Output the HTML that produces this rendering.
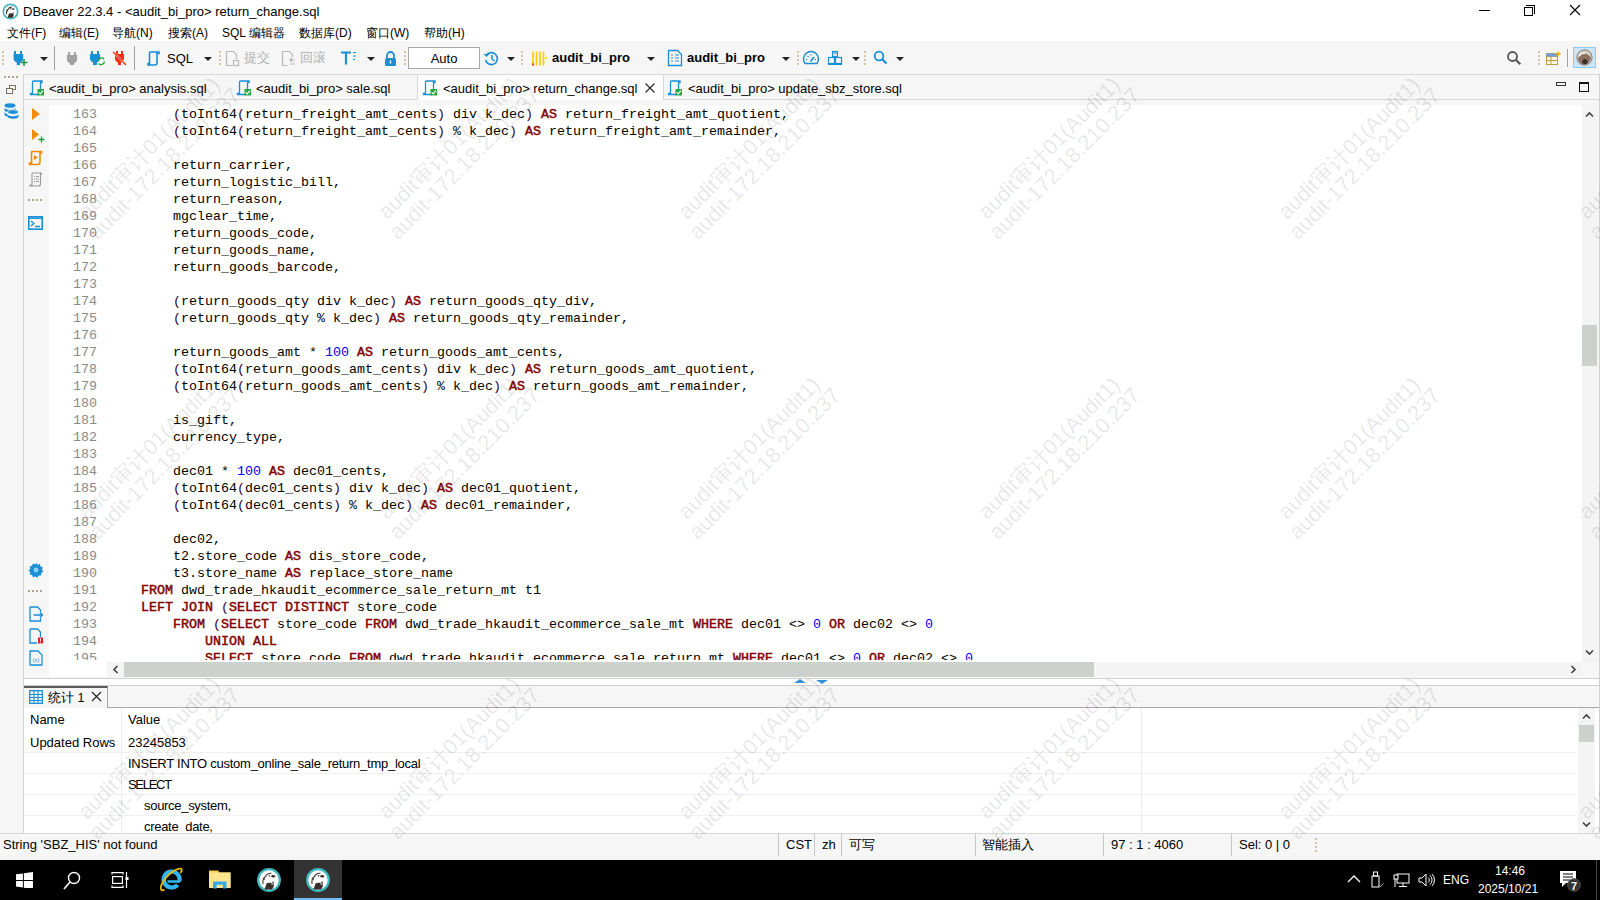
<!DOCTYPE html><html><head><meta charset="utf-8"><style>
*{margin:0;padding:0;box-sizing:border-box}
html,body{width:1600px;height:900px;overflow:hidden;background:#fff;font-family:"Liberation Sans",sans-serif;font-size:13px;color:#000}
.abs{position:absolute}
.t{position:absolute;white-space:pre;line-height:16px}
.code{position:absolute;left:0;white-space:pre;font-family:"Liberation Mono",monospace;font-size:13.33px;line-height:17px;color:#000}
.k{color:#800000;-webkit-text-stroke:0.45px #800000}
.n{color:#0000ff}
.p{color:#300040}
.ln{position:absolute;left:49px;width:48px;text-align:right;font-family:"Liberation Mono",monospace;font-size:13.33px;line-height:17px;color:#8a8a8a}
.sep{position:absolute;width:1px;background:#a0a0a0}
.grip{position:absolute;width:2px;background:repeating-linear-gradient(#cfc3a8 0 2px,transparent 2px 4px)}
.dd{position:absolute;width:0;height:0;border-left:4px solid transparent;border-right:4px solid transparent;border-top:4px solid #222}
.wm{position:absolute;width:300px;text-align:center;color:rgba(0,0,0,0.105);font-size:21.5px;line-height:22px;-webkit-text-stroke:0.2px rgba(0,0,0,0.06);transform:rotate(-45deg);white-space:pre;pointer-events:none}
</style></head><body>

<div class="abs" style="left:0;top:0;width:1600px;height:41px;background:#fff"></div>
<svg class="abs" style="left:2px;top:3px" width="17" height="17" viewBox="0 0 26 26"><circle cx="13" cy="13" r="11" fill="#fff" stroke="#42b8c2" stroke-width="2.6"/><path d="M8.5 22.5L10.5 16.5C12 15.5 14 15.5 15.5 16L17.5 14 17.8 19.5 16 22.5z" fill="#3a2e2a"/><ellipse cx="17.2" cy="9.2" rx="2" ry="1.3" fill="#3a2e2a"/><circle cx="13.5" cy="8.8" r="1" fill="#3a2e2a"/><path d="M7 17C6.5 13 7.5 10.5 9.5 9.5C10.5 7.2 12.5 6 15.5 6.2" fill="none" stroke="#3a2e2a" stroke-width="1.6"/><path d="M7 11.5l1.5-1 0.5 3z" fill="#3a2e2a"/></svg>
<div class="t" style="left:23px;top:4px;font-size:13px">DBeaver 22.3.4 - &lt;audit_bi_pro&gt; return_change.sql</div>
<div class="abs" style="left:1479px;top:10px;width:11px;height:1px;background:#000"></div>
<div class="abs" style="left:1526px;top:5px;width:9px;height:9px;border-top:1px solid #000;border-right:1px solid #000"></div>
<div class="abs" style="left:1524px;top:7px;width:9px;height:9px;border:1px solid #000;background:#fff"></div>
<svg class="abs" style="left:1569px;top:4px" width="12" height="12" viewBox="0 0 12 12"><path d="M1 1L11 11M11 1L1 11" stroke="#000" stroke-width="1.1"/></svg>
<div class="t" style="left:7px;top:25px;font-size:12px;line-height:16px">文件(F)</div>
<div class="t" style="left:59px;top:25px;font-size:12px;line-height:16px">编辑(E)</div>
<div class="t" style="left:112px;top:25px;font-size:12px;line-height:16px">导航(N)</div>
<div class="t" style="left:168px;top:25px;font-size:12px;line-height:16px">搜索(A)</div>
<div class="t" style="left:222px;top:25px;font-size:12px;line-height:16px">SQL 编辑器</div>
<div class="t" style="left:299px;top:25px;font-size:12px;line-height:16px">数据库(D)</div>
<div class="t" style="left:366px;top:25px;font-size:12px;line-height:16px">窗口(W)</div>
<div class="t" style="left:424px;top:25px;font-size:12px;line-height:16px">帮助(H)</div>
<div class="abs" style="left:0;top:41px;width:1600px;height:33px;background:#f6f6f6"></div>
<div class="grip" style="left:2px;top:51px;height:16px"></div>
<svg class="abs" style="left:12px;top:50px" width="18" height="17" viewBox="0 0 18 17">
<path d="M2 1h2v3h4V1h2v3h1.2v4.5c0 2-1.4 3.6-3.2 4.1V15H4.8v-2.4C3 12.1 1.6 10.5 1.6 8.5V4H2z" fill="#1a8fd6"/>
<path d="M12 9v7M8.5 12.5h7" stroke="#1aa03c" stroke-width="1.6"/></svg>
<div class="dd" style="left:40px;top:57px;border-top-color:#222"></div>
<div class="sep" style="left:54px;top:46px;height:24px"></div>
<svg class="abs" style="left:66px;top:51px" width="13" height="15" viewBox="0 0 13 15">
<path d="M2 1h2v3h4V1h2v3h1v4.5c0 2-1.4 3.4-3 3.9V14H4v-1.6C2.4 11.9 1 10.5 1 8.5V4h1z" fill="#a3a3a3"/></svg>
<svg class="abs" style="left:89px;top:50px" width="17" height="17" viewBox="0 0 17 17">
<path d="M2 1h2v3h4V1h2v3h1v4.5c0 2-1.4 3.4-3 3.9V15H4v-2.6C2.4 11.9 1 10.5 1 8.5V4h1z" fill="#1a8fd6"/>
<path d="M9 11a3.5 3.5 0 0 1 6-2M15.5 11.5a3.5 3.5 0 0 1-6 2" stroke="#1aa03c" stroke-width="1.4" fill="none"/></svg>
<svg class="abs" style="left:112px;top:50px" width="15" height="17" viewBox="0 0 15 17">
<path d="M4 1h2v3h3V1h2v3h1v4.5c0 2-1.4 3.4-3 3.9V15H6v-2.6C4.4 11.9 3 10.5 3 8.5V4h1z" fill="#ff2a12"/>
<path d="M1 2L14 15" stroke="#f6f6f6" stroke-width="2"/><path d="M1 2L14 15" stroke="#ff2a12" stroke-width="1.2"/></svg>
<div class="sep" style="left:134px;top:46px;height:24px"></div>
<svg class="abs" style="left:146px;top:50px" width="17" height="17" viewBox="0 0 17 17"><path d="M4 2h9v1.5h-2V13c0 1-1 2-2 2H2v-1.5h1.5V3.5C3.5 2.5 3.7 2 4 2z" fill="none" stroke="#1a8fd6" stroke-width="1.6"/></svg>
<div class="t" style="left:167px;top:51px;font-size:13px">SQL</div>
<div class="dd" style="left:204px;top:57px;border-top-color:#222"></div>
<div class="grip" style="left:219px;top:51px;height:16px"></div>
<svg class="abs" style="left:225px;top:50px" width="15" height="17" viewBox="0 0 15 17"><path d="M1.5 1.5h7l3 3V9M1.5 1.5V15.5h6" fill="none" stroke="#b8b8b8" stroke-width="1.2"/><rect x="8.5" y="10.5" width="5" height="5" fill="none" stroke="#b8b8b8" stroke-width="1.2"/></svg>
<div class="t" style="left:244px;top:50px;font-size:12.5px;color:#b0b0b0">提交</div>
<svg class="abs" style="left:281px;top:50px" width="15" height="17" viewBox="0 0 15 17"><path d="M1.5 1.5h7l3 3V7M1.5 1.5V15.5h5" fill="none" stroke="#b8b8b8" stroke-width="1.2"/><path d="M9 10h5M11 8l-2 2 2 2M9 14h5" fill="none" stroke="#b8b8b8" stroke-width="1.2"/></svg>
<div class="t" style="left:300px;top:50px;font-size:12.5px;color:#b0b0b0">回滚</div>
<svg class="abs" style="left:340px;top:50px" width="17" height="17" viewBox="0 0 17 17"><path d="M1 2.5h10M6 2.5v12" stroke="#1a8fd6" stroke-width="2.2"/><path d="M13 2.5h3M13 6h3M13 9.5h2" stroke="#1a8fd6" stroke-width="1.2"/></svg>
<div class="dd" style="left:367px;top:57px;border-top-color:#222"></div>
<svg class="abs" style="left:383px;top:50px" width="15" height="17" viewBox="0 0 15 17"><path d="M4 8V5.5a3.5 3.5 0 0 1 7 0V8" fill="none" stroke="#1a8fd6" stroke-width="1.8"/><rect x="2" y="8" width="11" height="8" rx="1.5" fill="#1a8fd6"/><rect x="6.8" y="10.5" width="1.4" height="3" fill="#fff"/></svg>
<div class="grip" style="left:404px;top:51px;height:16px"></div>
<div class="abs" style="left:408px;top:47px;width:72px;height:22px;border:1px solid #a8a8a8;background:#fff"></div>
<div class="t" style="left:408px;top:51px;width:72px;text-align:center;font-size:13px">Auto</div>
<svg class="abs" style="left:483px;top:50px" width="17" height="17" viewBox="0 0 17 17"><path d="M3.2 5.5A6 6 0 1 1 2.5 10" fill="none" stroke="#1a8fd6" stroke-width="1.6"/><path d="M0.5 4l3 3 3-3z" fill="#1a8fd6"/><path d="M9 5v4l2.5 2" fill="none" stroke="#1a8fd6" stroke-width="1.5"/></svg>
<div class="dd" style="left:507px;top:57px;border-top-color:#222"></div>
<div class="grip" style="left:521px;top:51px;height:16px"></div>
<svg class="abs" style="left:531px;top:50px" width="17" height="17" viewBox="0 0 17 17"><path d="M2 1.5v14M5.5 1.5v14M9 1.5v14M12.5 1.5v14" stroke="#ffcc00" stroke-width="1.7"/><path d="M2 13.5v2" stroke="#e8201a" stroke-width="1.7"/><circle cx="15.2" cy="8" r="1" fill="#ffcc00"/></svg>
<div class="t" style="left:552px;top:50px;font-size:13px;font-weight:bold">audit_bi_pro</div>
<div class="dd" style="left:647px;top:57px;border-top-color:#222"></div>
<svg class="abs" style="left:667px;top:49px" width="16" height="18" viewBox="0 0 16 18"><path d="M1.5 1.5h9l4 4v11h-13z" fill="none" stroke="#1a8fd6" stroke-width="1.3"/><path d="M4 6h2M4 9h2M4 12h2M8 6h4M8 9h4M8 12h4" stroke="#1a8fd6" stroke-width="1.2"/></svg>
<div class="t" style="left:687px;top:50px;font-size:13px;font-weight:bold">audit_bi_pro</div>
<div class="dd" style="left:782px;top:57px;border-top-color:#222"></div>
<div class="grip" style="left:797px;top:51px;height:16px"></div>
<svg class="abs" style="left:802px;top:50px" width="18" height="16" viewBox="0 0 18 16"><path d="M3 13.5A7.5 7.5 0 1 1 15 13.5Z" fill="none" stroke="#1a8fd6" stroke-width="1.5"/><path d="M8.5 11.5l3.5-4.5" stroke="#1a8fd6" stroke-width="1.7"/><path d="M4 9.5h1.5M12.5 9.5H14M9 4v1.5M5.5 6l1 1" stroke="#1a8fd6" stroke-width="1.1"/></svg>
<svg class="abs" style="left:827px;top:50px" width="16" height="16" viewBox="0 0 16 16"><rect x="5.5" y="1.5" width="5" height="5" fill="none" stroke="#1a8fd6" stroke-width="1.2"/><path d="M7 1.5v2h2v-2" fill="none" stroke="#1a8fd6" stroke-width="0.9"/><rect x="1.5" y="7.5" width="6" height="6" fill="none" stroke="#1a8fd6" stroke-width="1.2"/><rect x="8.5" y="7.5" width="6" height="6" fill="none" stroke="#1a8fd6" stroke-width="1.2"/><path d="M1 14.5h14" stroke="#1a8fd6" stroke-width="1"/></svg>
<div class="dd" style="left:852px;top:57px;border-top-color:#222"></div>
<div class="grip" style="left:864px;top:51px;height:16px"></div>
<svg class="abs" style="left:873px;top:50px" width="15" height="15" viewBox="0 0 15 15"><circle cx="6" cy="6" r="4.3" fill="none" stroke="#1a8fd6" stroke-width="1.8"/><path d="M9 9l4.5 4.5" stroke="#1a8fd6" stroke-width="2.2"/></svg>
<div class="dd" style="left:896px;top:57px;border-top-color:#222"></div>
<svg class="abs" style="left:1506px;top:50px" width="16" height="16" viewBox="0 0 16 16"><circle cx="6.5" cy="6.5" r="4.5" fill="none" stroke="#555" stroke-width="1.8"/><path d="M9.8 9.8l4.5 4.5" stroke="#555" stroke-width="2.2"/></svg>
<div class="grip" style="left:1538px;top:51px;height:16px"></div>
<svg class="abs" style="left:1545px;top:50px" width="17" height="16" viewBox="0 0 17 16"><rect x="1.5" y="3.5" width="11" height="11" fill="#fff8e0" stroke="#b89a50" stroke-width="1"/><path d="M1.5 6.5h11M1.5 10.5h11M6 3.5v11" stroke="#b89a50" stroke-width="1"/><path d="M1.5 3.5h11v3h-11z" fill="#6aa0e0"/><path d="M13 0.5l1 2.5 2.5 1-2.5 1-1 2.5-1-2.5-2.5-1 2.5-1z" fill="#f0b000"/></svg>
<div class="sep" style="left:1567px;top:49px;height:18px"></div>
<div class="abs" style="left:1573px;top:47px;width:23px;height:21px;background:#cce4f7;border:1px solid #99c9ef"></div>
<svg class="abs" style="left:1576px;top:49px" width="17" height="17" viewBox="0 0 17 17"><circle cx="8.5" cy="8.5" r="7.5" fill="#d8d0c8"/><path d="M2 10c1-4 4-6 7-5.5 3 0.5 5 2.5 6 4.5-1 4-4 6.5-7 6.5-3 0-5-2-6-5.5z" fill="#8a7060"/><path d="M6 14c0-2 1-4 3-4s3 2 3 4c-2 1.5-4 1.5-6 0z" fill="#3a2e28"/><path d="M3 7c2-2 4-3 6-2.5" stroke="#fff" stroke-width="1.2" fill="none"/><circle cx="8.5" cy="8.5" r="7.6" fill="none" stroke="#6a5a50" stroke-width="0.8"/></svg>
<div class="abs" style="left:0;top:74px;width:23px;height:759px;background:#f6f6f6"></div>
<div class="abs" style="left:23px;top:74px;width:1px;height:759px;background:#d4d4d4"></div>
<div class="abs" style="left:4px;top:76px;width:14px;height:2px;background:repeating-linear-gradient(90deg,#aca58f 0 2px,transparent 2px 4px)"></div>
<svg class="abs" style="left:6px;top:85px" width="10" height="9" viewBox="0 0 10 9"><rect x="3.5" y="0.5" width="6" height="4" fill="none" stroke="#7a7060" stroke-width="1"/><rect x="0.5" y="3.5" width="6" height="5" fill="#f6f6f6" stroke="#7a7060" stroke-width="1"/></svg>
<svg class="abs" style="left:3px;top:102px" width="17" height="18" viewBox="0 0 17 18"><ellipse cx="7" cy="3.5" rx="5.5" ry="2.3" fill="#1a8fd6"/><path d="M1.5 5.5c0 3 11 3 11 0v2.5c0 3-11 3-11 0z" fill="#1a8fd6"/><ellipse cx="10" cy="10" rx="5.5" ry="2.3" fill="#1a8fd6" stroke="#f6f6f6" stroke-width="0.8"/><path d="M4.5 12c0 3 11 3 11 0v2.5c0 3-11 3-11 0z" fill="#1a8fd6"/><path d="M1.5 9c0 3 3 3 3 3v2.5c-1 0-3-0.5-3-2z" fill="#1a8fd6"/></svg>
<div class="abs" style="left:24px;top:74px;width:1576px;height:26px;background:#f6f6f6;border-top:1px solid #d8d8d8;border-bottom:1px solid #d8d8d8"></div>
<div class="abs" style="left:417px;top:74px;width:247px;height:26px;background:#fff;border-left:1px solid #d8d8d8;border-right:1px solid #d8d8d8;border-top:1px solid #d8d8d8"></div>
<svg class="abs" style="left:29px;top:80px" width="16" height="16" viewBox="0 0 16 16"><path d="M4.5 1h8.5v1.5h-1.5V12M4.5 1C3.8 1 3.5 1.5 3.5 2V13.5H1.5v1h8" fill="none" stroke="#1a8fd6" stroke-width="1.3"/><rect x="8.5" y="9" width="6.5" height="6.5" fill="#28a745"/><path d="M9.8 12.3l1.5 1.6 2.6-3.2" fill="none" stroke="#fff" stroke-width="1.1"/></svg>
<div class="t" style="left:49px;top:81px;font-size:13px">&lt;audit_bi_pro&gt; analysis.sql</div>
<svg class="abs" style="left:236px;top:80px" width="16" height="16" viewBox="0 0 16 16"><path d="M4.5 1h8.5v1.5h-1.5V12M4.5 1C3.8 1 3.5 1.5 3.5 2V13.5H1.5v1h8" fill="none" stroke="#1a8fd6" stroke-width="1.3"/><rect x="8.5" y="9" width="6.5" height="6.5" fill="#28a745"/><path d="M9.8 12.3l1.5 1.6 2.6-3.2" fill="none" stroke="#fff" stroke-width="1.1"/></svg>
<div class="t" style="left:256px;top:81px;font-size:13px">&lt;audit_bi_pro&gt; sale.sql</div>
<svg class="abs" style="left:422px;top:80px" width="16" height="16" viewBox="0 0 16 16"><path d="M4.5 1h8.5v1.5h-1.5V12M4.5 1C3.8 1 3.5 1.5 3.5 2V13.5H1.5v1h8" fill="none" stroke="#1a8fd6" stroke-width="1.3"/><rect x="8.5" y="9" width="6.5" height="6.5" fill="#28a745"/><path d="M9.8 12.3l1.5 1.6 2.6-3.2" fill="none" stroke="#fff" stroke-width="1.1"/></svg>
<div class="t" style="left:443px;top:81px;font-size:13px">&lt;audit_bi_pro&gt; return_change.sql</div>
<svg class="abs" style="left:667px;top:80px" width="16" height="16" viewBox="0 0 16 16"><path d="M4.5 1h8.5v1.5h-1.5V12M4.5 1C3.8 1 3.5 1.5 3.5 2V13.5H1.5v1h8" fill="none" stroke="#1a8fd6" stroke-width="1.3"/><rect x="8.5" y="9" width="6.5" height="6.5" fill="#28a745"/><path d="M9.8 12.3l1.5 1.6 2.6-3.2" fill="none" stroke="#fff" stroke-width="1.1"/></svg>
<div class="t" style="left:688px;top:81px;font-size:13px">&lt;audit_bi_pro&gt; update_sbz_store.sql</div>
<svg class="abs" style="left:644px;top:82px" width="12" height="12" viewBox="0 0 12 12"><path d="M1.5 1.5l9 9M10.5 1.5l-9 9" stroke="#222" stroke-width="1.1"/></svg>
<div class="abs" style="left:1556px;top:82px;width:10px;height:4px;border:1.5px solid #333"></div>
<div class="abs" style="left:1579px;top:82px;width:10px;height:10px;border:1px solid #111;border-top-width:2px"></div>
<div class="abs" style="left:24px;top:100px;width:1576px;height:578px;background:#f6f6f6"></div>
<div class="abs" style="left:1599px;top:74px;width:1px;height:759px;background:#d0d0d0"></div>
<div class="abs" style="left:49px;top:105px;width:1533px;height:572px;background:#fff"></div>
<div class="abs" style="left:1582px;top:105px;width:17px;height:557px;background:#f4f4f4"></div>
<div class="abs" style="left:1582px;top:325px;width:15px;height:41px;background:#cdd1cd"></div>
<svg class="abs" style="left:1585px;top:110px;transform:rotate(0deg)" width="9" height="9" viewBox="0 0 9 9"><path d="M1 6.5L4.5 3 8 6.5" fill="none" stroke="#444" stroke-width="1.7"/></svg>
<svg class="abs" style="left:1585px;top:648px;transform:rotate(180deg)" width="9" height="9" viewBox="0 0 9 9"><path d="M1 6.5L4.5 3 8 6.5" fill="none" stroke="#444" stroke-width="1.7"/></svg>
<div class="abs" style="left:107px;top:662px;width:1475px;height:15px;background:#f4f4f4"></div>
<div class="abs" style="left:124px;top:662px;width:970px;height:15px;background:#cdd1cd"></div>
<svg class="abs" style="left:111px;top:665px;transform:rotate(-90deg)" width="9" height="9" viewBox="0 0 9 9"><path d="M1 6.5L4.5 3 8 6.5" fill="none" stroke="#444" stroke-width="1.7"/></svg>
<svg class="abs" style="left:1569px;top:665px;transform:rotate(90deg)" width="9" height="9" viewBox="0 0 9 9"><path d="M1 6.5L4.5 3 8 6.5" fill="none" stroke="#444" stroke-width="1.7"/></svg>
<div class="abs" style="left:24px;top:678px;width:1575px;height:1px;background:#d0d0d0"></div>
<div class="abs" style="left:24px;top:685px;width:1575px;height:1px;background:#d0d0d0"></div>
<div class="abs" style="left:794px;top:679px;width:0;height:0;border-left:6px solid transparent;border-right:6px solid transparent;border-bottom:4px solid #3b8fd6"></div>
<div class="abs" style="left:816px;top:680px;width:0;height:0;border-left:6px solid transparent;border-right:6px solid transparent;border-top:4px solid #3b8fd6"></div>
<div class="abs" style="left:49px;top:105px;width:1533px;height:555px;overflow:hidden">
<div class="ln" style="left:0;top:1px">163</div>
<div class="code" style="left:124px;top:1px"><span class="p">(</span>toInt64<span class="p">(</span>return_freight_amt_cents<span class="p">)</span> div k_dec<span class="p">)</span> <span class="k">AS</span> return_freight_amt_quotient,</div>
<div class="ln" style="left:0;top:18px">164</div>
<div class="code" style="left:124px;top:18px"><span class="p">(</span>toInt64<span class="p">(</span>return_freight_amt_cents<span class="p">)</span> % k_dec<span class="p">)</span> <span class="k">AS</span> return_freight_amt_remainder,</div>
<div class="ln" style="left:0;top:35px">165</div>
<div class="ln" style="left:0;top:52px">166</div>
<div class="code" style="left:124px;top:52px">return_carrier,</div>
<div class="ln" style="left:0;top:69px">167</div>
<div class="code" style="left:124px;top:69px">return_logistic_bill,</div>
<div class="ln" style="left:0;top:86px">168</div>
<div class="code" style="left:124px;top:86px">return_reason,</div>
<div class="ln" style="left:0;top:103px">169</div>
<div class="code" style="left:124px;top:103px">mgclear_time,</div>
<div class="ln" style="left:0;top:120px">170</div>
<div class="code" style="left:124px;top:120px">return_goods_code,</div>
<div class="ln" style="left:0;top:137px">171</div>
<div class="code" style="left:124px;top:137px">return_goods_name,</div>
<div class="ln" style="left:0;top:154px">172</div>
<div class="code" style="left:124px;top:154px">return_goods_barcode,</div>
<div class="ln" style="left:0;top:171px">173</div>
<div class="ln" style="left:0;top:188px">174</div>
<div class="code" style="left:124px;top:188px"><span class="p">(</span>return_goods_qty div k_dec<span class="p">)</span> <span class="k">AS</span> return_goods_qty_div,</div>
<div class="ln" style="left:0;top:205px">175</div>
<div class="code" style="left:124px;top:205px"><span class="p">(</span>return_goods_qty % k_dec<span class="p">)</span> <span class="k">AS</span> return_goods_qty_remainder,</div>
<div class="ln" style="left:0;top:222px">176</div>
<div class="ln" style="left:0;top:239px">177</div>
<div class="code" style="left:124px;top:239px">return_goods_amt * <span class="n">100</span> <span class="k">AS</span> return_goods_amt_cents,</div>
<div class="ln" style="left:0;top:256px">178</div>
<div class="code" style="left:124px;top:256px"><span class="p">(</span>toInt64<span class="p">(</span>return_goods_amt_cents<span class="p">)</span> div k_dec<span class="p">)</span> <span class="k">AS</span> return_goods_amt_quotient,</div>
<div class="ln" style="left:0;top:273px">179</div>
<div class="code" style="left:124px;top:273px"><span class="p">(</span>toInt64<span class="p">(</span>return_goods_amt_cents<span class="p">)</span> % k_dec<span class="p">)</span> <span class="k">AS</span> return_goods_amt_remainder,</div>
<div class="ln" style="left:0;top:290px">180</div>
<div class="ln" style="left:0;top:307px">181</div>
<div class="code" style="left:124px;top:307px">is_gift,</div>
<div class="ln" style="left:0;top:324px">182</div>
<div class="code" style="left:124px;top:324px">currency_type,</div>
<div class="ln" style="left:0;top:341px">183</div>
<div class="ln" style="left:0;top:358px">184</div>
<div class="code" style="left:124px;top:358px">dec01 * <span class="n">100</span> <span class="k">AS</span> dec01_cents,</div>
<div class="ln" style="left:0;top:375px">185</div>
<div class="code" style="left:124px;top:375px"><span class="p">(</span>toInt64<span class="p">(</span>dec01_cents<span class="p">)</span> div k_dec<span class="p">)</span> <span class="k">AS</span> dec01_quotient,</div>
<div class="ln" style="left:0;top:392px">186</div>
<div class="code" style="left:124px;top:392px"><span class="p">(</span>toInt64<span class="p">(</span>dec01_cents<span class="p">)</span> % k_dec<span class="p">)</span> <span class="k">AS</span> dec01_remainder,</div>
<div class="ln" style="left:0;top:409px">187</div>
<div class="ln" style="left:0;top:426px">188</div>
<div class="code" style="left:124px;top:426px">dec02,</div>
<div class="ln" style="left:0;top:443px">189</div>
<div class="code" style="left:124px;top:443px">t2.store_code <span class="k">AS</span> dis_store_code,</div>
<div class="ln" style="left:0;top:460px">190</div>
<div class="code" style="left:124px;top:460px">t3.store_name <span class="k">AS</span> replace_store_name</div>
<div class="ln" style="left:0;top:477px">191</div>
<div class="code" style="left:92px;top:477px"><span class="k">FROM</span> dwd_trade_hkaudit_ecommerce_sale_return_mt t1</div>
<div class="ln" style="left:0;top:494px">192</div>
<div class="code" style="left:92px;top:494px"><span class="k">LEFT</span> <span class="k">JOIN</span> <span class="p">(</span><span class="k">SELECT</span> <span class="k">DISTINCT</span> store_code</div>
<div class="ln" style="left:0;top:511px">193</div>
<div class="code" style="left:124px;top:511px"><span class="k">FROM</span> <span class="p">(</span><span class="k">SELECT</span> store_code <span class="k">FROM</span> dwd_trade_hkaudit_ecommerce_sale_mt <span class="k">WHERE</span> dec01 &lt;&gt; <span class="n">0</span> <span class="k">OR</span> dec02 &lt;&gt; <span class="n">0</span></div>
<div class="ln" style="left:0;top:528px">194</div>
<div class="code" style="left:156px;top:528px"><span class="k">UNION</span> <span class="k">ALL</span></div>
<div class="ln" style="left:0;top:545px">195</div>
<div class="code" style="left:156px;top:545px"><span class="k">SELECT</span> store_code <span class="k">FROM</span> dwd_trade_hkaudit_ecommerce_sale_return_mt <span class="k">WHERE</span> dec01 &lt;&gt; <span class="n">0</span> <span class="k">OR</span> dec02 &lt;&gt; <span class="n">0</span></div>
</div>
<svg class="abs" style="left:31px;top:107px" width="10" height="14" viewBox="0 0 10 14"><path d="M1 1l8 6-8 6z" fill="#f28c00"/></svg>
<svg class="abs" style="left:31px;top:128px" width="14" height="15" viewBox="0 0 14 15"><path d="M1 1l7 5.5-7 5.5z" fill="#f28c00"/><path d="M10.5 8.5v6M7.5 11.5h6" stroke="#1aa03c" stroke-width="1.3"/></svg>
<svg class="abs" style="left:28px;top:150px" width="16" height="16" viewBox="0 0 16 16"><path d="M4 1.5h9.5v1.5h-1.5V12c0 1.5-1 2.5-2.5 2.5H1.5v-1.5h2V3C3.5 2 3.8 1.5 4 1.5z" fill="none" stroke="#f28c00" stroke-width="1.6"/><path d="M6 5l4 2.5-4 2.5z" fill="#f28c00"/></svg>
<svg class="abs" style="left:29px;top:172px" width="14" height="15" viewBox="0 0 14 15"><path d="M3.5 1h9v1h-1v10c0 1-1 2-2 2H1v-1h2V2C3 1.5 3.2 1 3.5 1z" fill="none" stroke="#9a9a9a" stroke-width="1.1"/><path d="M5 4.5h1M7 4.5h3M5 7h1M7 7h3M5 9.5h1M7 9.5h3" stroke="#9a9a9a" stroke-width="1"/></svg>
<div class="abs" style="left:28px;top:199px;width:14px;height:2px;background:repeating-linear-gradient(90deg,#aca58f 0 2px,transparent 2px 4px)"></div>
<svg class="abs" style="left:28px;top:216px" width="15" height="14" viewBox="0 0 15 14"><rect x="0.8" y="0.8" width="13.4" height="12.4" fill="none" stroke="#1a8fd6" stroke-width="1.6"/><path d="M0.8 2.2h13.4" stroke="#1a8fd6" stroke-width="1.5"/><path d="M3 5l3 2.5-3 2.5M7 10.5h5" fill="none" stroke="#1a8fd6" stroke-width="1.3"/></svg>
<svg class="abs" style="left:28px;top:562px" width="16" height="16" viewBox="0 0 16 16"><path d="M8 0.8l1.6 1.9 2.4-0.6 0.6 2.4 2.3 0.9-0.9 2.3 1.3 2.1-2.1 1.3 0 2.5-2.5 0-1.3 2.1-2.1-1.3-2.3 0.9-0.9-2.3-2.4-0.6 0.6-2.4-1.9-1.6 1.9-1.6-0.6-2.4 2.4-0.6 0.9-2.3 2.3 0.9z" fill="#1a8fd6"/><circle cx="8" cy="8" r="2.4" fill="#8fd0f5"/></svg>
<div class="abs" style="left:28px;top:590px;width:14px;height:2px;background:repeating-linear-gradient(90deg,#aca58f 0 2px,transparent 2px 4px)"></div>
<svg class="abs" style="left:29px;top:606px" width="15" height="16" viewBox="0 0 15 16"><path d="M1 1h7.5l3 3v2M1 1v14h10.5v-3" fill="none" stroke="#1a8fd6" stroke-width="1.3"/><path d="M4.5 9h9M11 6.5l2.5 2.5-2.5 2.5" fill="none" stroke="#1a8fd6" stroke-width="1.3"/></svg>
<svg class="abs" style="left:29px;top:628px" width="15" height="16" viewBox="0 0 15 16"><path d="M1 1h7.5l3 3v5M1 1v14h7" fill="none" stroke="#1a8fd6" stroke-width="1.3"/><rect x="9" y="9.5" width="5" height="6" fill="#e02020"/><path d="M11.5 10.5v2.5M11.5 14v0.8" stroke="#fff" stroke-width="1"/></svg>
<svg class="abs" style="left:29px;top:650px" width="14" height="16" viewBox="0 0 14 16"><path d="M1 1h8l4 4v10H1z" fill="none" stroke="#1a8fd6" stroke-width="1.3"/><text x="7" y="12" font-size="6" text-anchor="middle" fill="#1a8fd6" font-family="Liberation Sans">(x)</text></svg>
<div class="abs" style="left:24px;top:686px;width:1575px;height:22px;background:#f6f6f6;border-bottom:1px solid #a8a8a8"></div>
<div class="abs" style="left:24px;top:686px;width:84px;height:22px;background:#f6f6f6;border-right:1px solid #a8a8a8;border-top:2px solid #5a5a5a"></div>
<svg class="abs" style="left:29px;top:690px" width="14" height="14" viewBox="0 0 14 14"><rect x="0.7" y="0.7" width="12.6" height="12.6" fill="none" stroke="#1a8fd6" stroke-width="1.3"/><path d="M0.7 4.5h12.6M0.7 7.5h12.6M0.7 10.5h12.6M5 0.7v12.6M9 0.7v12.6" stroke="#1a8fd6" stroke-width="1.1"/></svg>
<div class="t" style="left:48px;top:690px;font-size:12.5px">统计 1</div>
<svg class="abs" style="left:91px;top:691px" width="11" height="11" viewBox="0 0 11 11"><path d="M1 1l9 9M10 1l-9 9" stroke="#222" stroke-width="1.1"/></svg>
<div class="abs" style="left:24px;top:708px;width:1575px;height:125px;background:#fff"></div>
<div class="abs" style="left:121px;top:708px;width:1px;height:125px;background:#e8eef2"></div>
<div class="abs" style="left:1141px;top:708px;width:1px;height:125px;background:#e8eef2"></div>
<div class="abs" style="left:24px;top:752px;width:1551px;height:1px;background:#f0f0f0"></div>
<div class="abs" style="left:24px;top:773px;width:1551px;height:1px;background:#f0f0f0"></div>
<div class="abs" style="left:24px;top:794px;width:1551px;height:1px;background:#f0f0f0"></div>
<div class="abs" style="left:24px;top:815px;width:1551px;height:1px;background:#f0f0f0"></div>
<div class="t" style="left:30px;top:712px;font-size:13px;letter-spacing:0px">Name</div>
<div class="t" style="left:128px;top:712px;font-size:13px;letter-spacing:0px">Value</div>
<div class="t" style="left:30px;top:735px;font-size:13px;letter-spacing:0px">Updated Rows</div>
<div class="t" style="left:128px;top:735px;font-size:13px;letter-spacing:0px">23245853</div>
<div class="t" style="left:128px;top:756px;font-size:13px;letter-spacing:-0.25px">INSERT INTO custom_online_sale_return_tmp_local</div>
<div class="t" style="left:128px;top:777px;font-size:13px;letter-spacing:-1.3px">SELECT</div>
<div class="t" style="left:144px;top:798px;font-size:13px;letter-spacing:-0.3px">source_system,</div>
<div class="t" style="left:144px;top:819px;font-size:13px;letter-spacing:-0.3px">create_date,</div>
<div class="abs" style="left:1578px;top:708px;width:17px;height:125px;background:#f4f4f4"></div>
<div class="abs" style="left:1579px;top:725px;width:15px;height:17px;background:#cdd1cd"></div>
<svg class="abs" style="left:1582px;top:712px;transform:rotate(0deg)" width="9" height="9" viewBox="0 0 9 9"><path d="M1 6.5L4.5 3 8 6.5" fill="none" stroke="#444" stroke-width="1.7"/></svg>
<svg class="abs" style="left:1582px;top:820px;transform:rotate(180deg)" width="9" height="9" viewBox="0 0 9 9"><path d="M1 6.5L4.5 3 8 6.5" fill="none" stroke="#444" stroke-width="1.7"/></svg>
<div class="abs" style="left:0;top:833px;width:1600px;height:27px;background:#f6f6f6;border-top:1px solid #d8d8d8"></div>
<div class="t" style="left:3px;top:837px;font-size:13px">String 'SBZ_HIS' not found</div>
<div class="sep" style="left:778px;top:834px;height:22px;background:#c8c8c8"></div>
<div class="sep" style="left:814px;top:834px;height:22px;background:#c8c8c8"></div>
<div class="sep" style="left:841px;top:834px;height:22px;background:#c8c8c8"></div>
<div class="sep" style="left:975px;top:834px;height:22px;background:#c8c8c8"></div>
<div class="sep" style="left:1103px;top:834px;height:22px;background:#c8c8c8"></div>
<div class="sep" style="left:1231px;top:834px;height:22px;background:#c8c8c8"></div>
<div class="t" style="left:786px;top:837px;font-size:13px">CST</div>
<div class="t" style="left:822px;top:837px;font-size:13px">zh</div>
<div class="t" style="left:849px;top:837px;font-size:13px">可写</div>
<div class="t" style="left:982px;top:837px;font-size:13px">智能插入</div>
<div class="t" style="left:1111px;top:837px;font-size:13px">97 : 1 : 4060</div>
<div class="t" style="left:1239px;top:837px;font-size:13px">Sel: 0 | 0</div>
<div class="grip" style="left:1315px;top:838px;height:16px"></div>
<div class="abs" style="left:0;top:860px;width:1600px;height:40px;background:#000"></div>
<svg class="abs" style="left:16px;top:872px" width="17" height="16" viewBox="0 0 18 17"><path d="M0 2.5l7.3-1v7H0zM8.3 1.3L18 0v8.5H8.3zM0 9.5h7.3v7L0 15.5zM8.3 9.5H18V18l-9.7-1.3z" fill="#fff"/></svg>
<svg class="abs" style="left:63px;top:871px" width="18" height="19" viewBox="0 0 18 19"><circle cx="11" cy="7" r="5.5" fill="none" stroke="#fff" stroke-width="1.4"/><path d="M7 11L1 18" stroke="#fff" stroke-width="1.6"/></svg>
<svg class="abs" style="left:111px;top:872px" width="18" height="16" viewBox="0 0 18 16"><path d="M1 0.7h11M1 15.3h11M1 0v2.5M12 0v2.5M1 13.5V16M12 13.5V16" stroke="#fff" stroke-width="1.2"/><rect x="1.6" y="4.6" width="9.8" height="6.8" fill="none" stroke="#fff" stroke-width="1.2"/><path d="M15.5 0v16" stroke="#fff" stroke-width="1.2"/><rect x="14.5" y="5" width="3" height="3" fill="#fff"/></svg>
<svg class="abs" style="left:159px;top:867px" width="25" height="25" viewBox="0 0 25 25"><path d="M20.4 14.3A8 8 0 1 0 18.6 17.8" fill="none" stroke="#33b4ee" stroke-width="4.2"/><path d="M8.5 14.5h12.5" stroke="#33b4ee" stroke-width="2.6"/><path d="M5.5 22.8C2.5 24 0.8 22.5 2.2 18.5 4 13.5 10 6 16.5 3 20 1.3 22.8 1 22.8 3 22.8 4.2 22 5.2 21.3 6" fill="none" stroke="#f0be00" stroke-width="1.8"/></svg>
<svg class="abs" style="left:209px;top:870px" width="22" height="19" viewBox="0 0 22 19"><path d="M0 0.5h9l1.5 2H21.5V18H0z" fill="#f6cf52"/><rect x="0" y="2.5" width="21.5" height="15.5" fill="#fde48e"/><path d="M4 18.5V11.5h13.5V18.5h-3.6v-3.8h-6.3v3.8z" fill="#34a8ea"/></svg>
<svg class="abs" style="left:256px;top:867px" width="26" height="26" viewBox="0 0 26 26"><circle cx="13" cy="13" r="10.8" fill="#fff" stroke="#42b8c2" stroke-width="2.2"/><path d="M8.5 22.5L10.5 16.5C12 15.5 14 15.5 15.5 16L17.5 14 17.8 19.5 16 22.5z" fill="#3a2e2a"/><ellipse cx="17.2" cy="9.2" rx="1.9" ry="1.2" fill="#3a2e2a"/><circle cx="13.5" cy="8.8" r="0.8" fill="#3a2e2a"/><path d="M7 17C6.5 13 7.5 10.5 9.5 9.5C10.5 7.2 12.5 6 15.5 6.2" fill="none" stroke="#3a2e2a" stroke-width="1.1"/><path d="M7 11.5l1.5-1 0.5 3z" fill="#3a2e2a"/><path d="M15.2 17.5l1-2.2 0.6 2.4z" fill="#fff"/></svg>
<div class="abs" style="left:294px;top:860px;width:48px;height:40px;background:#333"></div>
<div class="abs" style="left:294px;top:898px;width:48px;height:2px;background:#76b9ed"></div>
<svg class="abs" style="left:305px;top:867px" width="26" height="26" viewBox="0 0 26 26"><circle cx="13" cy="13" r="10.8" fill="#fff" stroke="#42b8c2" stroke-width="2.2"/><path d="M8.5 22.5L10.5 16.5C12 15.5 14 15.5 15.5 16L17.5 14 17.8 19.5 16 22.5z" fill="#3a2e2a"/><ellipse cx="17.2" cy="9.2" rx="1.9" ry="1.2" fill="#3a2e2a"/><circle cx="13.5" cy="8.8" r="0.8" fill="#3a2e2a"/><path d="M7 17C6.5 13 7.5 10.5 9.5 9.5C10.5 7.2 12.5 6 15.5 6.2" fill="none" stroke="#3a2e2a" stroke-width="1.1"/><path d="M7 11.5l1.5-1 0.5 3z" fill="#3a2e2a"/><path d="M15.2 17.5l1-2.2 0.6 2.4z" fill="#fff"/></svg>
<svg class="abs" style="left:1347px;top:874px" width="14" height="9" viewBox="0 0 14 9"><path d="M1 8l6-6 6 6" fill="none" stroke="#fff" stroke-width="1.3"/></svg>
<svg class="abs" style="left:1371px;top:871px" width="14" height="17" viewBox="0 0 14 17"><rect x="1" y="5" width="7" height="11" fill="none" stroke="#fff" stroke-width="1"/><rect x="2.5" y="1" width="4" height="4" fill="none" stroke="#fff" stroke-width="1"/><path d="M8 14l1.5 1.5 3-3" fill="none" stroke="#bbb" stroke-width="1"/></svg>
<svg class="abs" style="left:1393px;top:873px" width="17" height="14" viewBox="0 0 17 14"><rect x="4" y="1" width="12" height="9" fill="none" stroke="#fff" stroke-width="1"/><rect x="1" y="2" width="4" height="4" fill="#000" stroke="#fff" stroke-width="1"/><path d="M10 10v3M6 13.5h8M2 6v8" stroke="#fff" stroke-width="1"/></svg>
<svg class="abs" style="left:1418px;top:873px" width="17" height="14" viewBox="0 0 17 14"><path d="M1 5h3l4-4v12L4 9H1z" fill="none" stroke="#fff" stroke-width="1"/><path d="M10 4.5a3 3 0 0 1 0 5M12 2.5a6 6 0 0 1 0 9M14 1a8.5 8.5 0 0 1 0 12" fill="none" stroke="#fff" stroke-width="1"/></svg>
<div class="t" style="left:1443px;top:872px;font-size:12px;color:#fff">ENG</div>
<div class="t" style="left:1495px;top:863px;font-size:12px;color:#fff">14:46</div>
<div class="t" style="left:1478px;top:881px;font-size:12px;color:#fff">2025/10/21</div>
<svg class="abs" style="left:1559px;top:870px" width="24" height="22" viewBox="0 0 24 22"><path d="M1 1h16v12H7l-4 4v-4H1z" fill="#fff"/><path d="M4 4h10M4 7h10M4 10h7" stroke="#000" stroke-width="1"/><circle cx="15" cy="15" r="6.3" fill="#333" stroke="#555" stroke-width="1"/><text x="15" y="19.5" font-size="11" font-weight="bold" text-anchor="middle" fill="#fff" font-family="Liberation Sans">7</text></svg>
<div class="abs" style="left:1596px;top:860px;width:1px;height:40px;background:#444"></div>
<div class="abs" style="left:0;top:0;width:1600px;height:860px;overflow:hidden;pointer-events:none">
<div class="wm" style="left:7px;top:134px">audit审计01(Audit1)
audit-172.18.210.237</div>
<div class="wm" style="left:307px;top:134px">audit审计01(Audit1)
audit-172.18.210.237</div>
<div class="wm" style="left:607px;top:134px">audit审计01(Audit1)
audit-172.18.210.237</div>
<div class="wm" style="left:907px;top:134px">audit审计01(Audit1)
audit-172.18.210.237</div>
<div class="wm" style="left:1207px;top:134px">audit审计01(Audit1)
audit-172.18.210.237</div>
<div class="wm" style="left:1507px;top:134px">audit审计01(Audit1)
audit-172.18.210.237</div>
<div class="wm" style="left:7px;top:434px">audit审计01(Audit1)
audit-172.18.210.237</div>
<div class="wm" style="left:307px;top:434px">audit审计01(Audit1)
audit-172.18.210.237</div>
<div class="wm" style="left:607px;top:434px">audit审计01(Audit1)
audit-172.18.210.237</div>
<div class="wm" style="left:907px;top:434px">audit审计01(Audit1)
audit-172.18.210.237</div>
<div class="wm" style="left:1207px;top:434px">audit审计01(Audit1)
audit-172.18.210.237</div>
<div class="wm" style="left:1507px;top:434px">audit审计01(Audit1)
audit-172.18.210.237</div>
<div class="wm" style="left:7px;top:734px">audit审计01(Audit1)
audit-172.18.210.237</div>
<div class="wm" style="left:307px;top:734px">audit审计01(Audit1)
audit-172.18.210.237</div>
<div class="wm" style="left:607px;top:734px">audit审计01(Audit1)
audit-172.18.210.237</div>
<div class="wm" style="left:907px;top:734px">audit审计01(Audit1)
audit-172.18.210.237</div>
<div class="wm" style="left:1207px;top:734px">audit审计01(Audit1)
audit-172.18.210.237</div>
<div class="wm" style="left:1507px;top:734px">audit审计01(Audit1)
audit-172.18.210.237</div>
</div>
</body></html>
